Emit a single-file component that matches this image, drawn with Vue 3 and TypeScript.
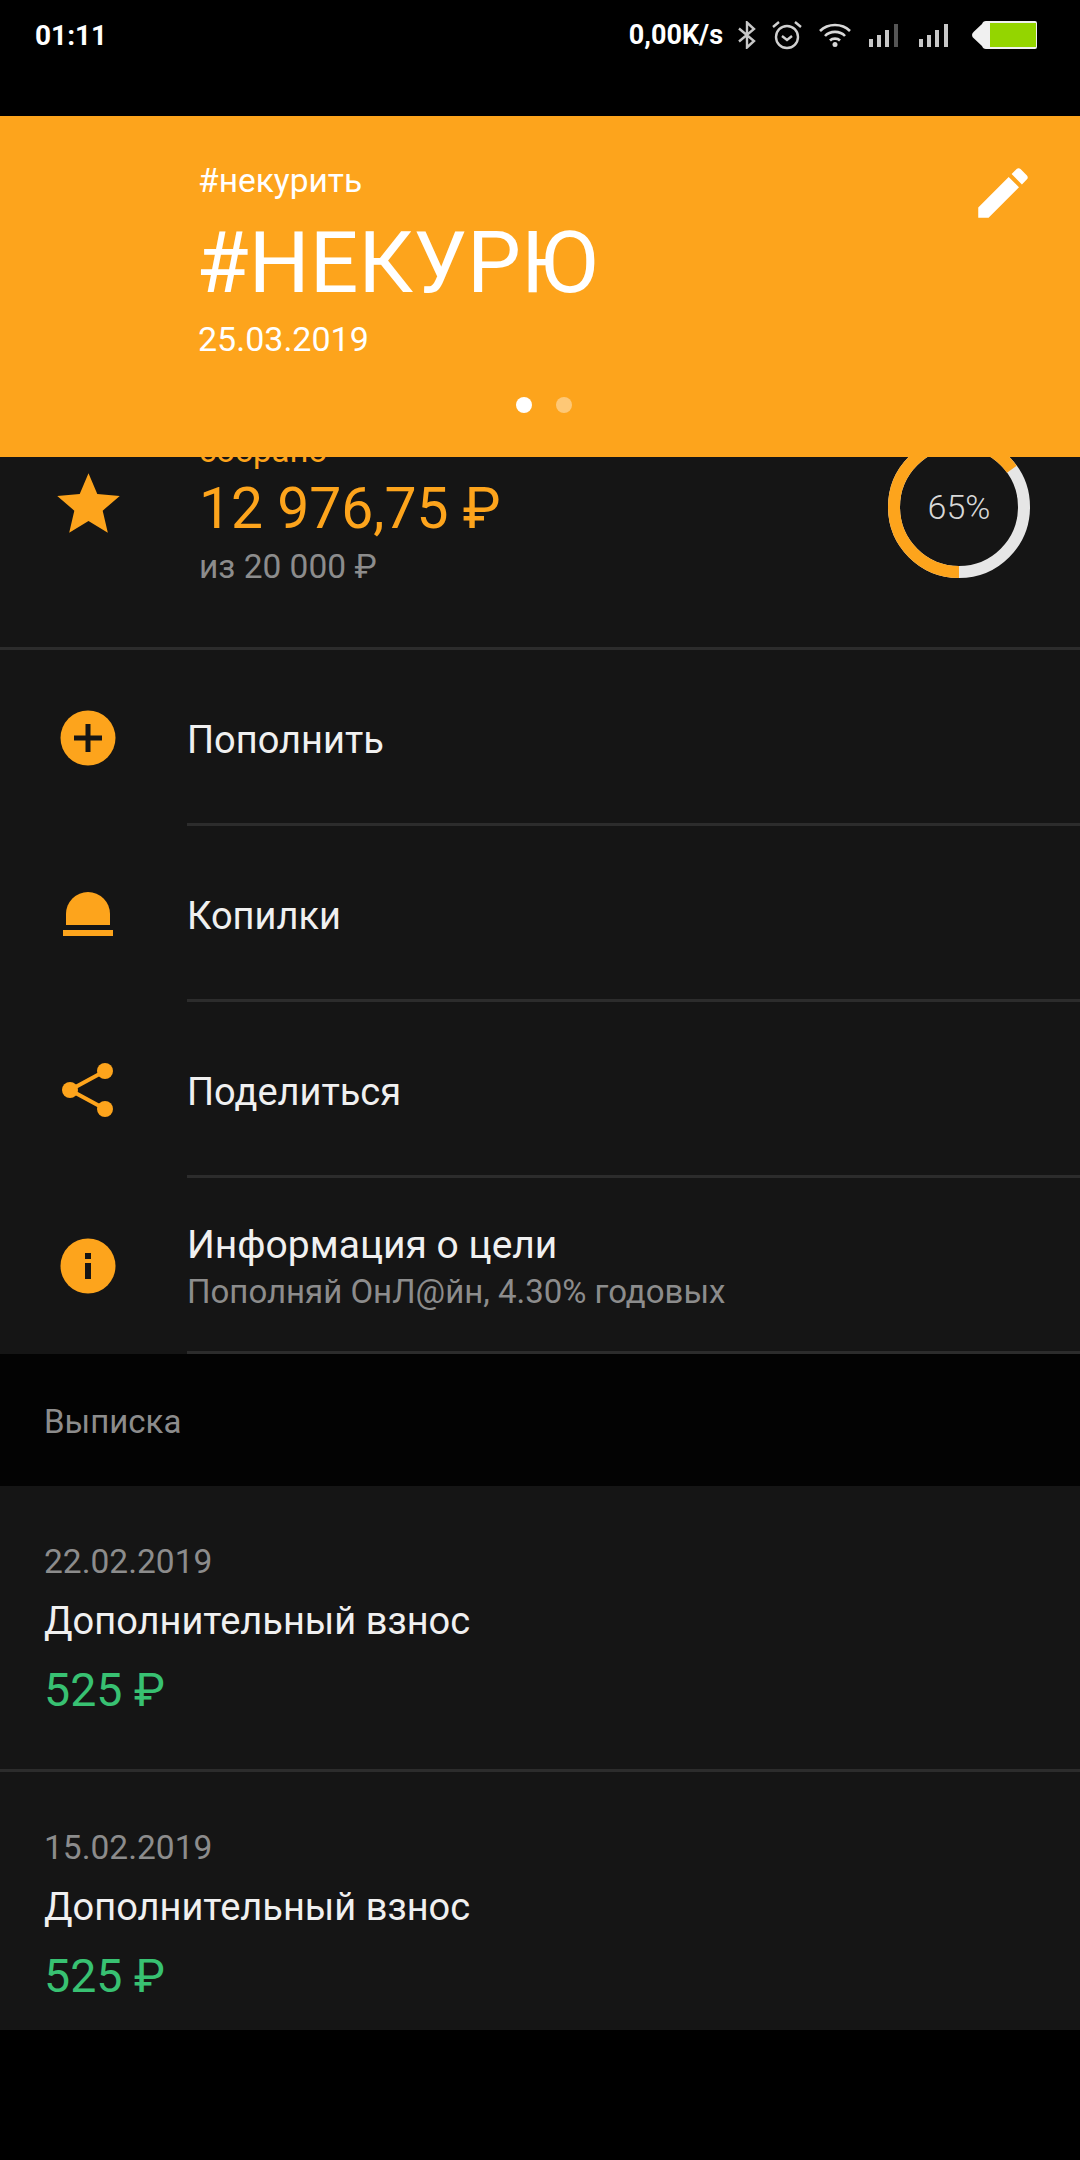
<script setup lang="ts">
interface MenuRow {
  id: string
  title: string
  sub?: string
}

interface Payment {
  date: string
  title: string
  amount: string
}

const menu: MenuRow[] = [
  { id: 'add', title: 'Пополнить' },
  { id: 'piggy', title: 'Копилки' },
  { id: 'share', title: 'Поделиться' },
  { id: 'info', title: 'Информация о цели', sub: 'Пополняй ОнЛ@йн, 4.30% годовых' },
]

const payments: Payment[] = [
  { date: '22.02.2019', title: 'Дополнительный взнос', amount: '525 ₽' },
  { date: '15.02.2019', title: 'Дополнительный взнос', amount: '525 ₽' },
]

const percent = 65
const radius = 65
const circle = 2 * Math.PI * radius
</script>

<template>
  <div class="page">
    <div class="status">
      <span class="time">01:11</span>
      <div class="status-right">
        <span class="speed">0,00K/s</span>
        <svg class="st-bt" width="18" height="28" viewBox="0 0 18 28" fill="none" stroke="#c8c8c8" stroke-width="2.4">
          <path d="M1 7.500 16 20 9 26.500V1.500L16 8 1 20.500" />
        </svg>
        <svg class="st-alarm" width="30" height="30" viewBox="0 0 30 30" fill="none" stroke="#d0d0d0" stroke-width="2.4">
          <circle cx="15" cy="17" r="11" />
          <path d="M10 16l5 4 5-4" />
          <path d="M1 7l6-5M29 7l-6-5" />
        </svg>
        <svg class="st-wifi" width="32" height="24" viewBox="0 0 32 24" fill="none" stroke="#d8d8d8" stroke-width="2.6">
          <path d="M1 8C9 0 23 0 31 8" />
          <path d="M6 13C11 7.500 21 7.500 26 13" />
          <path d="M11 17.500C13.500 15 18.500 15 21 17.500" />
          <circle cx="16" cy="21.500" r="2.500" fill="#d8d8d8" stroke="none" />
        </svg>
        <svg class="st-sig" width="34" height="24" viewBox="0 0 34 24" fill="#c8c8c8">
          <rect x="0" y="16" width="4" height="8" />
          <rect x="8" y="12" width="4" height="12" />
          <rect x="16" y="7" width="4" height="17" />
          <rect x="25" y="1" width="4" height="23" fill="#555" />
        </svg>
        <svg class="st-sig" width="34" height="24" viewBox="0 0 34 24" fill="#c8c8c8">
          <rect x="0" y="16" width="4" height="8" />
          <rect x="8" y="12" width="4" height="12" />
          <rect x="16" y="7" width="4" height="17" />
          <rect x="25" y="1" width="4" height="23" />
        </svg>
        <svg class="st-bat" width="67" height="30" viewBox="0 0 67 30">
          <path d="M1 15q0-2 2-3.500L11 4q1-3 4-3h49a2 2 0 0 1 2 2v24a2 2 0 0 1-2 2H15q-3 0-4-3l-8-7.500Q1 17 1 15z" fill="#f0f0f0" />
          <rect x="19" y="3" width="46" height="24" fill="#94d500" />
        </svg>
      </div>
    </div>

    <header class="hero">
      <div class="hero-top">
        <div class="hero-text">
          <div class="hero-tag">#некурить</div>
          <div class="hero-title">#НЕКУРЮ</div>
          <div class="hero-date">25.03.2019</div>
        </div>
        <svg class="hero-edit" width="66" height="66" viewBox="0 0 24 24" fill="#fff">
          <path d="M3 17.250V21h3.750L17.810 9.940l-3.750-3.750L3 17.250zM20.710 7.040c.39-.39.39-1.020 0-1.410l-2.340-2.340c-.39-.39-1.020-.39-1.410 0l-1.830 1.830 3.750 3.750 1.830-1.830z" />
        </svg>
      </div>
      <div class="dots">
        <span class="dot on"></span>
        <span class="dot"></span>
      </div>
    </header>

    <section class="summary">
      <svg class="star" width="75" height="75" viewBox="0 0 24 24" fill="#fda41c">
        <path d="M12 17.270 18.180 21l-1.640-7.030L22 9.240l-7.190-.61L12 2 9.190 8.630 2 9.240l5.460 4.730L5.820 21z" />
      </svg>
      <div class="sum-text">
        <div class="sum-label">собрано</div>
        <div class="sum-value">12 976,75 ₽</div>
        <div class="sum-of">из 20 000 ₽</div>
      </div>
      <div class="ring">
        <svg width="142" height="142" viewBox="0 0 142 142" fill="none" stroke-width="12">
          <circle cx="71" cy="71" :r="radius" stroke="#e6e6e6" />
          <circle
            cx="71"
            cy="71"
            :r="radius"
            stroke="#fda41c"
            :stroke-dasharray="`${(circle * percent) / 100} ${circle}`"
            transform="rotate(90 71 71)"
          />
        </svg>
        <span class="ring-label">{{ percent }}%</span>
      </div>
    </section>

    <section class="menu">
      <div v-for="row in menu" :key="row.id" class="row">
        <div class="row-icon">
          <svg width="72" height="72" viewBox="0 0 72 72">
            <template v-if="row.id === 'add'">
              <circle cx="36" cy="36" r="27.500" fill="#fda41c" />
              <path d="M33.500 22h5v11.500H50v5H38.500V50h-5V38.500H22v-5h11.500z" fill="#151515" />
            </template>
            <template v-else-if="row.id === 'piggy'">
              <path d="M14 47V36a22 22 0 0 1 44 0v11z" fill="#fda41c" />
              <rect x="11" y="52" width="50" height="6" fill="#fda41c" />
            </template>
            <template v-else-if="row.id === 'share'">
              <path d="M53 17 18 36 53 55" fill="none" stroke="#fda41c" stroke-width="4" />
              <circle cx="53" cy="17" r="8" fill="#fda41c" />
              <circle cx="18" cy="36" r="8" fill="#fda41c" />
              <circle cx="53" cy="55" r="8" fill="#fda41c" />
            </template>
            <template v-else>
              <circle cx="36" cy="36" r="27.500" fill="#fda41c" />
              <path d="M33 23h6v6h-6zM33 33h6v16h-6z" fill="#151515" />
            </template>
          </svg>
        </div>
        <div class="row-body">
          <div class="row-title" :class="{ big: row.sub }">{{ row.title }}</div>
          <div v-if="row.sub" class="row-sub">{{ row.sub }}</div>
        </div>
      </div>
    </section>

    <div class="section-head">Выписка</div>

    <section class="list">
      <div v-for="p in payments" :key="p.date" class="pay">
        <div class="pay-date">{{ p.date }}</div>
        <div class="pay-title">{{ p.title }}</div>
        <div class="pay-amount">{{ p.amount }}</div>
      </div>
    </section>
  </div>
</template>

<style scoped>
.page {
  width: 1080px;
  height: 2160px;
  overflow: hidden;
  background: #000;
  color: #f0f0f0;
  font-family: Roboto, "Liberation Sans", sans-serif;
}

.status {
  height: 116px;
  padding: 0 42px 46px 35px;
  box-sizing: border-box;
  display: flex;
  align-items: center;
  justify-content: space-between;
  color: #fff;
  font-weight: 700;
  font-size: 26px;
}

.time {
  font-size: 28px;
}

.status-right {
  display: flex;
  align-items: center;
}

.speed {
  margin-right: 15px;
  margin-left: -3px;
  font-size: 27px;
}

.st-alarm {
  margin-left: 16px;
}

.st-wifi {
  margin-left: 17px;
}

.st-sig {
  margin-left: 18px;
}

.st-sig + .st-sig {
  margin-left: 16px;
}

.st-bat {
  margin-left: 18px;
}

.hero {
  position: relative;
  z-index: 2;
  height: 341px;
  box-sizing: border-box;
  background: #fda41c;
  color: #fff;
  padding-top: 46px;
}

.hero-top {
  display: flex;
  justify-content: space-between;
  padding: 0 44px 0 198px;
  height: 221px;
}

.hero-tag {
  font-size: 33.500px;
  line-height: 38px;
}

.hero-title {
  font-size: 85.500px;
  line-height: 100px;
  margin-top: 13px;
  margin-left: -2px;
}

.hero-date {
  font-size: 34px;
  line-height: 38px;
  margin-top: 7px;
}

.hero-edit {
  margin-top: -2px;
}

.dots {
  display: flex;
  justify-content: center;
  gap: 24px;
  padding-left: 7px;
  padding-top: 14px;
}

.dot {
  width: 16px;
  height: 16px;
  border-radius: 50%;
  background: #fff;
  opacity: 0.4;
}

.dot.on {
  opacity: 1;
}

.summary {
  position: relative;
  margin-top: -40px;
  height: 233px;
  box-sizing: border-box;
  padding: 0 50px 50px 51px;
  background: #151515;
  border-bottom: 3px solid #2c2c2c;
  display: flex;
  align-items: center;
}

.star {
  margin-top: -6px;
}

.sum-text {
  flex: 1;
  margin-left: 73px;
  padding-top: 7px;
}

.sum-label {
  font-size: 33px;
  line-height: 38px;
  color: #fda41c;
}

.sum-value {
  font-size: 57px;
  line-height: 78px;
  color: #fda41c;
}

.sum-of {
  font-size: 33.500px;
  line-height: 44px;
  margin-top: -3px;
  color: #8c8c8c;
}

.ring {
  position: relative;
  width: 142px;
  height: 142px;
}

.ring svg {
  display: block;
}

.ring-label {
  position: absolute;
  inset: 0;
  display: flex;
  align-items: center;
  justify-content: center;
  font-size: 34px;
  font-weight: 300;
  color: #d8d8d8;
}

.menu {
  background: #151515;
}

.row {
  display: flex;
  height: 176px;
}

.row-icon {
  width: 187px;
  box-sizing: border-box;
  padding-left: 52px;
  display: flex;
  align-items: center;
}

.row-icon svg {
  display: block;
}

.row-body {
  flex: 1;
  box-sizing: border-box;
  padding-top: 6px;
  border-bottom: 3px solid #2c2c2c;
  display: flex;
  flex-direction: column;
  justify-content: center;
}

.row-title {
  font-size: 38px;
  line-height: 48px;
}

.row-title.big {
  font-size: 39px;
  margin-top: -3px;
}

.row-sub {
  font-size: 33px;
  line-height: 40px;
  margin-top: 3px;
  color: #8c8c8c;
}

.section-head {
  height: 132px;
  box-sizing: border-box;
  padding: 2px 0 0 44px;
  display: flex;
  align-items: center;
  background: #030303;
  color: #8c8c8c;
  font-size: 33px;
}

.list {
  background: #151515;
}

.pay {
  height: 286px;
  box-sizing: border-box;
  padding: 56px 44px 0;
  border-bottom: 3px solid #2c2c2c;
}

.pay:last-child {
  height: 258px;
  padding-top: 56px;
  border-bottom: 0;
}

.pay-date {
  font-size: 33.500px;
  line-height: 40px;
  color: #8c8c8c;
}

.pay-title {
  font-size: 38px;
  line-height: 48px;
  margin-top: 15px;
}

.pay-amount {
  font-size: 46.500px;
  line-height: 56px;
  margin-top: 17px;
  color: #38c172;
}
</style>
